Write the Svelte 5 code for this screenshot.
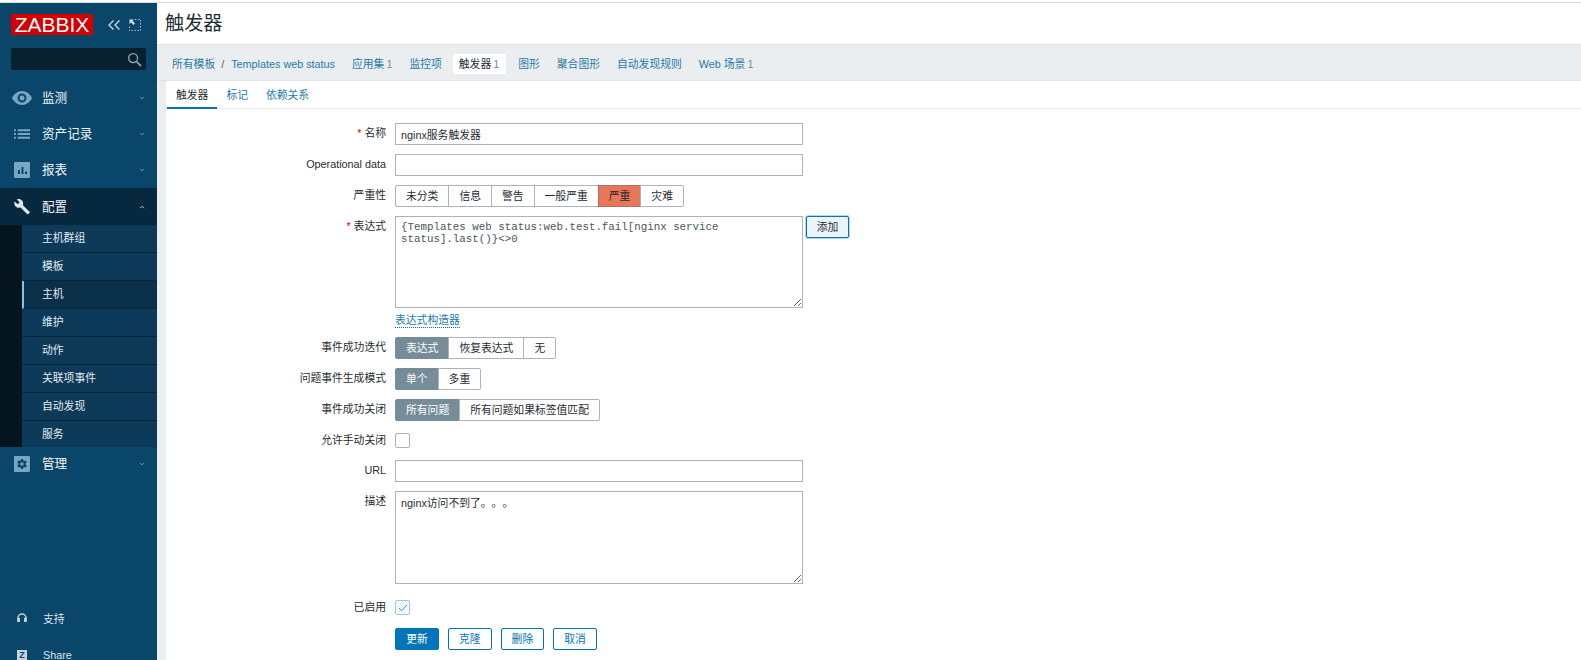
<script>
	const monitoring = [
		{ label: '监测', icon: 'eye' },
		{ label: '资产记录', icon: 'list' },
		{ label: '报表', icon: 'chart' }
	];
	const configItems = ['主机群组', '模板', '主机', '维护', '动作', '关联项事件', '自动发现', '服务'];
	const navLinks = [
		{ label: '应用集', count: 1 },
		{ label: '监控项' },
		{ label: '触发器', count: 1, active: true },
		{ label: '图形' },
		{ label: '聚合图形' },
		{ label: '自动发现规则' },
		{ label: 'Web 场景', count: 1 }
	];
	const severities = ['未分类', '信息', '警告', '一般严重', '严重', '灾难'];
</script>

<div class="page">
	<aside class="sidebar">
		<div class="brand">
			<span class="logo">ZABBIX</span>
			<svg class="collapse" width="12" height="10" viewBox="0 0 12 10" fill="none" stroke="#c6d6e0" stroke-width="1.400">
				<path d="M5.500.5 1 5l4.500 4.500M11.500.5 7 5l4.500 4.500" />
			</svg>
			<svg class="kiosk" width="12" height="12" viewBox="0 0 12 12" fill="none">
				<path d="M6 .5h5.500v11H.5V6" stroke="#9db8c8" stroke-dasharray="1.500 1.500" />
				<path d="M.5.500h4.500L3.500 2l2.500 2.500-1.500 1.500L2 3.500.5 5z" fill="#d5e2ea" />
			</svg>
		</div>
		<div class="search">
			<svg width="15" height="15" viewBox="0 0 16 16" fill="none" stroke="#8fa6b4" stroke-width="1.400">
				<circle cx="6.500" cy="6.500" r="4.800" />
				<path d="m10 10 5 5" stroke-width="1.800" />
			</svg>
		</div>

		<nav class="menu">
			{#each monitoring as item}
				<div class="item">
					<span class="icon">
						{#if item.icon === 'eye'}
							<svg width="20" height="14" viewBox="0 0 20 14">
								<path fill-rule="evenodd" fill="#78a7c3" d="M10 0c4.500 0 8 3 10 7-2 4-5.500 7-10 7S2 11 0 7c2-4 5.500-7 10-7zm0 2.500a4.500 4.500 0 1 0 0 9 4.500 4.500 0 0 0 0-9zm0 2a2.500 2.500 0 1 1 0 5 2.500 2.500 0 0 1 0-5z" />
							</svg>
						{:else if item.icon === 'list'}
							<svg width="16" height="10" viewBox="0 0 17 10" fill="#78a7c3">
								<path d="M0 0h2v2H0zM4 0h13v2H4zM0 4h2v2H0zM4 4h13v2H4zM0 8h2v2H0zM4 8h13v2H4z" />
							</svg>
						{:else}
							<svg width="16" height="16" viewBox="0 0 16 16">
								<path fill-rule="evenodd" fill="#78a7c3" d="M1 0h14a1 1 0 0 1 1 1v14a1 1 0 0 1-1 1H1a1 1 0 0 1-1-1V1a1 1 0 0 1 1-1zm3 8v4h2V8zm3.500-3v7h2V5zM11 9.500V12h2V9.500z" />
							</svg>
						{/if}
					</span>
					<span class="label">{item.label}</span>
					<svg class="chevron" width="6" height="4" viewBox="0 0 7 5" fill="none" stroke="#8fb0c4"><path d="m1 1 2.500 2.500L6 1" /></svg>
				</div>
			{/each}

			<div class="item open">
				<span class="icon">
					<svg width="16" height="16" viewBox="0 0 16 16" fill="#dfe8ee">
						<path d="M15.500 12.800 8.900 6.200c.6-1.700.2-3.600-1.100-4.900C6.400-.1 4.400-.4 2.800.4l2.900 2.900-2 2-3-2.900C-.1 4 .3 6 1.600 7.400c1.300 1.300 3.200 1.700 4.900 1.100l6.600 6.600c.3.300.8.300 1.100 0l1.700-1.700c.4-.2.400-.400.100-.6z" />
					</svg>
				</span>
				<span class="label">配置</span>
				<svg class="chevron" width="6" height="4" viewBox="0 0 7 5" fill="none" stroke="#dfe8ee"><path d="m1 4 2.500-2.500L6 4" /></svg>
			</div>
			<ul class="submenu">
				{#each configItems as sub}
					<li class:selected={sub === '主机'}>{sub}</li>
				{/each}
			</ul>

			<div class="item admin">
				<span class="icon">
					<svg width="16" height="16" viewBox="0 0 16 16">
						<path fill-rule="evenodd" fill="#78a7c3" d="M1 0h14a1 1 0 0 1 1 1v14a1 1 0 0 1-1 1H1a1 1 0 0 1-1-1V1a1 1 0 0 1 1-1zm6 3-.3 1.500-1 .5L4.300 4.500 3.200 6.300l1.100 1v1.400l-1.100 1 1.100 1.800 1.400-.5 1 .5L7 13h2l.3-1.500 1-.5 1.400.5 1.100-1.800-1.100-1V7.300l1.100-1-1.100-1.800-1.400.5-1-.5L9 3zm1 3.300a1.700 1.700 0 1 1 0 3.400 1.700 1.700 0 0 1 0-3.400z" />
					</svg>
				</span>
				<span class="label">管理</span>
				<svg class="chevron" width="6" height="4" viewBox="0 0 7 5" fill="none" stroke="#8fb0c4"><path d="m1 1 2.500 2.500L6 1" /></svg>
			</div>
		</nav>

		<div class="bottom">
			<div class="foot">
				<span class="icon">
					<svg width="10" height="12" viewBox="0 0 11 13" fill="none" stroke="#c4d4de" stroke-width="1.500">
						<path d="M1 7V5.500a4.500 4.500 0 0 1 9 0V7" />
						<path d="M1 6h1.500v3H1zM8.500 6H10v3H8.500z" fill="#c4d4de" />
					</svg>
				</span>
				<span>支持</span>
			</div>
			<div class="foot">
				<span class="icon"><b class="share">Z</b></span>
				<span>Share</span>
			</div>
		</div>
	</aside>

	<main class="content">
		<header class="title"><h1>触发器</h1></header>

		<div class="breadcrumbs">
			<a href="#a">所有模板</a>
			<span class="slash">/</span>
			<a class="host" href="#a">Templates web status</a>
			{#each navLinks as link}
				<span class="nav-link" class:active={link.active}>
					<a href="#a">{link.label}</a>{#if link.count}<em>{link.count}</em>{/if}
				</span>
			{/each}
		</div>

		<section class="panel">
			<div class="tabs">
				<span class="tab current">触发器</span>
				<span class="tab">标记</span>
				<span class="tab">依赖关系</span>
			</div>

			<form class="form">
				<label class="name"><i>*</i> 名称</label>
				<input type="text" value="nginx服务触发器" />

				<label class="name">Operational data</label>
				<input type="text" />

				<label class="name">严重性</label>
				<div class="segments severity">
					{#each severities as s}
						<span class="seg" class:high={s === '严重'}>{s}</span>
					{/each}
				</div>

				<label class="name"><i>*</i> 表达式</label>
				<div class="expression">
					<textarea class="mono">{'{Templates web status:web.test.fail[nginx service status].last()}<>0'}</textarea>
					<button type="button" class="add">添加</button>
				</div>

				<span></span>
				<a class="builder" href="#a">表达式构造器</a>

				<label class="name">事件成功迭代</label>
				<div class="segments">
					<span class="seg on">表达式</span><span class="seg">恢复表达式</span><span class="seg">无</span>
				</div>

				<label class="name">问题事件生成模式</label>
				<div class="segments">
					<span class="seg on">单个</span><span class="seg">多重</span>
				</div>

				<label class="name">事件成功关闭</label>
				<div class="segments">
					<span class="seg on">所有问题</span><span class="seg">所有问题如果标签值匹配</span>
				</div>

				<label class="name">允许手动关闭</label>
				<span class="check"></span>

				<label class="name">URL</label>
				<input type="text" />

				<label class="name">描述</label>
				<textarea class="desc">nginx访问不到了。。。</textarea>

				<label class="name enabled-label">已启用</label>
				<span class="check checked">
					<svg width="10" height="8" viewBox="0 0 11 9" fill="none" stroke="#3b8fc4" stroke-width="1.100"><path d="m1 4.500 3 3L10 1" /></svg>
				</span>

				<span></span>
				<div class="actions">
					<button type="button" class="primary">更新</button>
					<button type="button">克隆</button>
					<button type="button">删除</button>
					<button type="button">取消</button>
				</div>
			</form>
		</section>
	</main>
</div>

<style>
	:global(body) {
		margin: 0;
		background: #fff;
		overflow: hidden;
	}

	.page {
		--cjk: Arial, "Liberation Sans", "Noto Sans CJK SC", sans-serif;
		display: flex;
		height: 658px;
		margin-top: 2px;
		overflow: hidden;
		border-top: 1px solid #d9dbdc;
		box-sizing: border-box;
		font: 10.8px/14px var(--cjk);
		color: #1f2c33;
		background: #ebeef0;
	}

	.sidebar {
		flex: 0 0 157px;
		display: flex;
		flex-direction: column;
		background: #0a466a;
		color: #f2f5f7;
		overflow: hidden;
	}

	.brand {
		display: flex;
		align-items: center;
		padding: 11px 0 0 11px;
		height: 21px;
	}

	.logo {
		background: #d40000;
		color: #fff;
		font-size: 21px;
		line-height: 21px;
		width: 82px;
		text-align: center;
	}

	.collapse {
		margin-left: 15px;
	}

	.kiosk {
		margin-left: 9px;
	}

	.search {
		box-sizing: border-box;
		margin: 13px 11px 0;
		height: 22px;
		background: #07212f;
		border: 1px solid #052030;
		border-radius: 2px;
		display: flex;
		align-items: center;
		justify-content: flex-end;
		padding-right: 3px;
	}

	.menu {
		margin-top: 10px;
	}

	.item {
		display: flex;
		align-items: center;
		height: 36px;
		font-size: 12.6px;
		padding-left: 12px;
	}

	.item .icon {
		width: 20px;
		margin-right: 10px;
		display: flex;
		justify-content: center;
		align-items: center;
	}

	.item .label {
		flex: 1;
	}

	.chevron {
		margin-right: 12px;
	}

	.item.open {
		background: #07293f;
		height: 37px;
	}

	.item.admin {
		height: 34px;
	}

	.submenu {
		list-style: none;
		margin: 0;
		padding: 0 0 0 22px;
		background: #04151f;
	}

	.submenu li {
		height: 27px;
		line-height: 26px;
		padding-left: 20px;
		background: #0c3a58;
		border-bottom: 1px solid #05263a;
		color: #e3eaef;
	}

	.submenu li:last-child {
		height: 26px;
		border-bottom: 0;
	}

	.submenu li.selected {
		background: #0a3049;
		border-left: 2px solid #7fc4ee;
		padding-left: 18px;
	}

	.bottom {
		margin-top: auto;
		margin-bottom: -13px;
	}

	.foot {
		display: flex;
		align-items: center;
		height: 36px;
		padding-left: 17px;
		color: #dbe5eb;
	}

	.foot .icon {
		width: 26px;
		display: flex;
	}

	.share {
		background: #c4d4de;
		color: #0a466a;
		width: 10px;
		height: 10px;
		font-size: 9px;
		line-height: 10px;
		text-align: center;
	}

	.content {
		flex: 1;
		min-width: 0;
	}

	.title {
		background: #fff;
		height: 42px;
		padding-left: 8px;
		display: flex;
		align-items: center;
		border-bottom: 1px solid #dfe3e5;
		box-sizing: border-box;
	}

	h1 {
		margin: 0;
		font-size: 19.2px;
		font-weight: 400;
		color: #1f2c33;
	}

	.breadcrumbs {
		box-sizing: border-box;
		height: 36px;
		padding: 2px 0 0 15px;
		display: flex;
		align-items: center;
		background: #ebeef0;
		border-bottom: 1px solid #dfe3e5;
		white-space: nowrap;
	}

	a {
		color: #1f7aa8;
		text-decoration: none;
	}

	.slash {
		margin: 0 7px 0 6px;
		color: #4c5a64;
	}

	.host {
		margin-right: 11px;
	}

	.nav-link {
		padding: 3px 6px;
		border-radius: 2px;
		margin-right: 5px;
	}

	.nav-link em {
		font-style: normal;
		color: #7c8c96;
		margin-left: 2px;
	}

	.nav-link.active {
		background: #fff;
		padding-right: 7px;
		margin-right: 6px;
	}

	.nav-link.active a {
		color: #1f2c33;
	}

	.panel {
		margin-left: 9px;
		background: #fff;
		height: 600px;
	}

	.tabs {
		display: flex;
		height: 27px;
		padding-left: 1px;
		border-bottom: 1px solid #e4e8ea;
	}

	.tab {
		padding: 7px 9px 0;
		color: #1f7aa8;
		height: 20px;
	}

	.tab.current {
		color: #1f2c33;
		border-bottom: 2px solid #0275b8;
		height: 19px;
	}

	.form {
		display: grid;
		grid-template-columns: 220px 408px;
		column-gap: 9px;
		row-gap: 9px;
		margin-top: 14.4px;
		align-items: start;
		justify-items: start;
	}

	.name {
		justify-self: end;
		line-height: 21px;
		color: #1f2c33;
		white-space: nowrap;
	}

	.name i {
		font-style: normal;
		color: #d40000;
	}

	input,
	textarea {
		box-sizing: border-box;
		width: 408px;
		margin: 0;
		padding: 0 5px;
		border: 1px solid #acb4b9;
		background: #fff;
		color: #1f2c33;
		font: 10.8px/14px var(--cjk);
		border-radius: 0;
		outline: 0;
		display: block;
	}

	input {
		height: 21.6px;
	}

	textarea {
		padding: 4px 5px;
		height: 92.6px;
		resize: both;
	}

	.mono {
		font: 10.8px/12px "Liberation Mono", "Courier New", monospace;
		color: #4a555c;
	}

	.desc {
		height: 93px;
		text-spacing-trim: space-all;
	}

	.segments {
		display: flex;
		height: 22px;
	}

	.seg {
		box-sizing: border-box;
		height: 22px;
		line-height: 20px;
		padding: 0 10px;
		border: 1px solid #acb4b9;
		margin-left: -1px;
		white-space: nowrap;
		background: #fff;
	}

	.seg:first-child {
		margin-left: 0;
		border-radius: 2px 0 0 2px;
	}

	.seg:last-child {
		border-radius: 0 2px 2px 0;
	}

	.seg.high {
		background: #e97659;
		border-color: #a8746a;
	}

	.seg.on {
		background: #768d99;
		border-color: #768d99;
		color: #fff;
	}

	.expression {
		display: flex;
		gap: 3px;
		align-items: flex-start;
	}

	.expression textarea {
		flex: none;
	}

	.add {
		flex: none;
		width: 43px;
		box-shadow: 0 0 0 1px #b9d7ea;
		background: #ebf4fa;
		color: #1f2c33;
		border-color: #0275b8;
	}

	button {
		height: 22px;
		box-sizing: border-box;
		margin: 0;
		padding: 0;
		width: 43.6px;
		font: 10.8px/14px var(--cjk);
		background: #fff;
		color: #0275b8;
		border: 1px solid #0275b8;
		border-radius: 2px;
	}

	button.primary {
		width: 44px;
		background: #0275b8;
		color: #fff;
	}

	.builder {
		line-height: 14px;
		margin-top: -4px;
		border-bottom: 1px dotted #0275b8;
	}

	.check {
		box-sizing: border-box;
		width: 15px;
		height: 15px;
		border: 1px solid #acb4b9;
		border-radius: 2px;
		display: flex;
		align-items: center;
		justify-content: center;
		margin: 2.5px 0 3.3px;
	}

	.check.checked {
		background: #f2f8fc;
		border-color: #a9c4d4;
		margin: 7.4px 0 4px;
	}

	.enabled-label {
		margin-top: 4px;
	}

	.actions {
		display: flex;
		gap: 9px;
	}
</style>
